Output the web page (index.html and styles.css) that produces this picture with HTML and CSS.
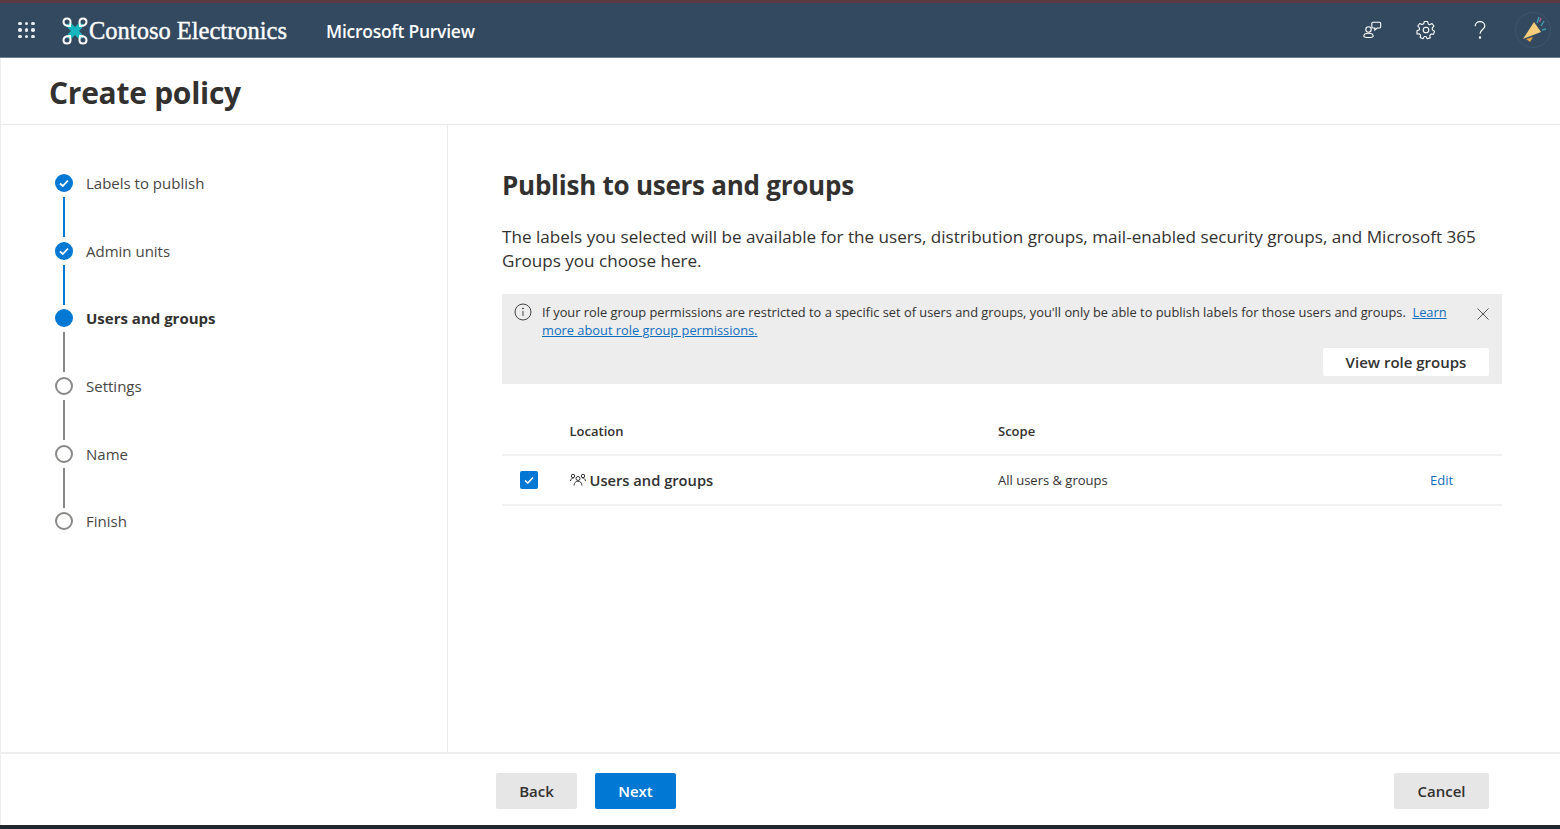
FILE: index.html
```html
<!DOCTYPE html>
<html lang="en">

<head>
    <meta charset="UTF-8">
    <meta name="viewport" content="width=device-width, initial-scale=1.0">
    <title>Create policy</title>
    <link rel="stylesheet" href="styles.css">
</head>

<body>
    <div class="app">
        <header class="topbar">
            <div class="waffle" aria-hidden="true">
                <i></i><i></i><i></i><i></i><i></i><i></i><i></i><i></i><i></i>
            </div>
            <svg class="logo" viewBox="0 0 26 28" width="26" height="28" aria-hidden="true">
                <path d="M5 7 L9 6 L13 10 L17 6 L21 7 L20 11 L17 14 L20 17 L21 21 L17 22 L13 18 L9 22 L5 21 L6 17 L9 14 L6 11 Z" fill="#17b5bd" />
                <g fill="none" stroke="#fff" stroke-width="2">
                    <path d="M8 9 C4 9 1.500 8 1.500 5 C1.500 2.500 3 1.500 5 1.500 C7 1.500 8.500 3 8.500 5 C8.500 6.500 8 8 8 9 Z" />
                    <path d="M18 9 C22 9 24.500 8 24.500 5 C24.500 2.500 23 1.500 21 1.500 C19 1.500 17.500 3 17.500 5 C17.500 6.500 18 8 18 9 Z" />
                    <path d="M8 19 C4 19 1.500 20 1.500 23 C1.500 25.500 3 26.500 5 26.500 C7 26.500 8.500 25 8.500 23 C8.500 21.500 8 20 8 19 Z" />
                    <path d="M18 19 C22 19 24.500 20 24.500 23 C24.500 25.500 23 26.500 21 26.500 C19 26.500 17.500 25 17.500 23 C17.500 21.500 18 20 18 19 Z" />
                </g>
            </svg>
            <span class="brand">Contoso Electronics</span>
            <span class="product">Microsoft Purview</span>
            <div class="top-actions">
                <button class="top-icon" aria-label="Contact">
                    <svg viewBox="0 0 20 20" width="20" height="20" fill="none" stroke="#fff" stroke-width="1.1">
                        <circle cx="6.500" cy="9.500" r="2.700" />
                        <path d="M1.800 16 C1.800 13.800 3.500 13.200 6.500 13.200 C9.500 13.200 11.200 13.800 11.200 16 C11.200 18 1.800 18 1.800 16 Z" />
                        <path d="M11 2.200 H17.500 C18.300 2.200 18.700 2.800 18.700 3.400 V6.800 C18.700 7.600 18.200 8 17.500 8 H15.200 L12.800 10 V8 H11 C10.200 8 9.800 7.500 9.800 6.800 V3.400 C9.800 2.700 10.300 2.200 11 2.200 Z" />
                    </svg>
                </button>
                <button class="top-icon" aria-label="Settings">
                    <svg viewBox="0 0 20 20" width="20" height="20" fill="none" stroke="#fff" stroke-width="1.1">
                        <circle cx="10" cy="10" r="2.800" />
                        <path d="M8.300 1.500 H11.700 L12.200 4 L13.700 4.700 L16 3.500 L18 6.200 L16.200 8 L16.400 9.900 L18.500 11.300 L17.500 14.300 L15 14.100 L13.800 15.400 L14.200 17.900 L11.200 18.700 L10 16.500 L8.300 16.500 L7 18.700 L4.200 17.600 L4.600 15.100 L3.400 13.800 L1 14 L1 10.800 L3.400 9.800 L3.500 8 L1.800 6 L3.700 3.500 L6 4.600 L7.700 3.800 Z" stroke-linejoin="round" />
                    </svg>
                </button>
                <button class="top-icon" aria-label="Help">
                    <svg viewBox="0 0 20 20" width="20" height="20" fill="none" stroke="#fff" stroke-width="1.2">
                        <path d="M5.200 6.200 C5.200 3.500 7.300 1.600 10 1.600 C12.700 1.600 14.800 3.500 14.800 6 C14.800 9.500 10 9.700 10 13.800" />
                        <circle cx="10" cy="17.500" r=".6" fill="#fff" />
                    </svg>
                </button>
                <div class="avatar" aria-label="What's new">
                    <svg viewBox="0 0 36 36" width="36" height="36">
                        <circle cx="18" cy="18" r="17.500" fill="none" stroke="#41566c" />
                        <path d="M8 27 L19 10 L26 20 Z" fill="#f7cd7c" />
                        <path d="M11 27 L15 30 L18 25 Z" fill="#e9a23f" />
                        <path d="M22 11 L24 5 M26 14 L29 9 M27 18 L31 17" stroke="#3f9fb0" stroke-width="1.400" />
                        <path d="M24.500 10 L26 6" stroke="#b65a8c" stroke-width="1.400" />
                    </svg>
                </div>
            </div>
        </header>

        <div class="page-title">
            <h1>Create policy</h1>
        </div>

        <div class="wizard">
            <nav class="steps">
                <div class="step done">
                    <span class="dot">
                        <svg viewBox="0 0 18 18" width="18" height="18"><path d="M5 9.500 L7.800 12 L13 6.500" fill="none" stroke="#fff" stroke-width="1.800" /></svg>
                    </span>
                    <span class="step-name">Labels to publish</span>
                </div>
                <div class="step done">
                    <span class="dot">
                        <svg viewBox="0 0 18 18" width="18" height="18"><path d="M5 9.500 L7.800 12 L13 6.500" fill="none" stroke="#fff" stroke-width="1.800" /></svg>
                    </span>
                    <span class="step-name">Admin units</span>
                </div>
                <div class="step current">
                    <span class="dot"></span>
                    <span class="step-name">Users and groups</span>
                </div>
                <div class="step">
                    <span class="dot"></span>
                    <span class="step-name">Settings</span>
                </div>
                <div class="step">
                    <span class="dot"></span>
                    <span class="step-name">Name</span>
                </div>
                <div class="step last">
                    <span class="dot"></span>
                    <span class="step-name">Finish</span>
                </div>
            </nav>

            <main class="content">
                <h2>Publish to users and groups</h2>
                <p class="intro">The labels you selected will be available for the users, distribution groups, mail-enabled security groups, and Microsoft 365 Groups you choose here.</p>

                <div class="notice">
                    <div class="notice-row">
                        <svg class="notice-icon" viewBox="0 0 18 18" width="18" height="18" fill="none" stroke="#444" stroke-width="1">
                            <circle cx="9" cy="9" r="8" />
                            <path d="M9 8 V13" />
                            <circle cx="9" cy="5.500" r=".5" fill="#444" />
                        </svg>
                        <p>If your role group permissions are restricted to a specific set of users and groups, you'll only be able to publish labels for those users and groups. &nbsp;<a href="#">Learn more about role group permissions.</a></p>
                        <button class="notice-close" aria-label="Close">
                            <svg viewBox="0 0 12 12" width="12" height="12" fill="none" stroke="#555" stroke-width="1"><path d="M.5 .5 L11.500 11.500 M11.500 .5 L.5 11.500" /></svg>
                        </button>
                    </div>
                    <div class="notice-actions">
                        <button class="btn-white">View role groups</button>
                    </div>
                </div>

                <div class="table">
                    <div class="tr th">
                        <div class="c-check"></div>
                        <div class="c-location">Location</div>
                        <div class="c-scope">Scope</div>
                        <div class="c-edit"></div>
                    </div>
                    <div class="tr">
                        <div class="c-check">
                            <span class="checkbox">
                                <svg viewBox="0 0 18 18" width="18" height="18"><path d="M5 9.500 L7.800 12 L13 6.500" fill="none" stroke="#fff" stroke-width="1.500" /></svg>
                            </span>
                        </div>
                        <div class="c-location loc-name">
                            <svg viewBox="0 0 16 14" width="16" height="14" fill="none" stroke="#333" stroke-width="1">
                                <circle cx="3" cy="3" r="1.700" />
                                <circle cx="13" cy="3" r="1.700" />
                                <circle cx="8" cy="5.500" r="2" />
                                <path d="M.5 8 C.8 6 2 5.200 3.500 5.200 M15.500 8 C15.200 6 14 5.200 12.500 5.200 M4 12.500 C4 10 5.800 8.200 8 8.200 C10.200 8.200 12 10 12 12.500" />
                            </svg>
                            <span>Users and groups</span>
                        </div>
                        <div class="c-scope">All users &amp; groups</div>
                        <div class="c-edit"><a href="#">Edit</a></div>
                    </div>
                </div>
            </main>
        </div>

        <footer class="footer">
            <div class="footer-main">
                <button class="btn">Back</button>
                <button class="btn primary">Next</button>
            </div>
            <button class="btn">Cancel</button>
        </footer>
    </div>
    <div class="bottom-strip"></div>
</body>

</html>
```

FILE: styles.css
```css
/* General Styles */
body {
    margin: 0;
    height: 829px;
    overflow: hidden;
    background: #fff;
    color: #323130;
    font-family: "Open Sans", "Noto Sans", sans-serif;
    display: flex;
    flex-direction: column;
}

button {
    font-family: inherit;
    cursor: pointer;
}

a {
    color: #106ebe;
}

.app {
    flex: 1;
    display: flex;
    flex-direction: column;
    min-height: 0;
    border-left: 1px solid #eee;
}

.bottom-strip {
    height: 4px;
    background: #20272e;
}

/* Top bar */
.topbar {
    height: 54px;
    border-top: 3px solid #5c3a43;
    margin-left: -1px;
    background: #33495f;
    border-bottom: 1px solid #6b7d8f;
    display: flex;
    align-items: center;
    color: #fff;
    flex-shrink: 0;
}

.waffle {
    width: 16px;
    margin-left: 18px;
    display: grid;
    grid-template-columns: repeat(3, 3.500px);
    gap: 3px;
}

.waffle i {
    width: 3.500px;
    height: 3.500px;
    border-radius: 50%;
    background: #e8edf2;
}

.logo {
    margin-left: 28px;
    margin-top: 1px;
}

.brand {
    font-family: "Liberation Serif", serif;
    font-size: 24.500px;
    margin-left: 1px;
    margin-top: 2px;
    -webkit-text-stroke: .4px #fff;
}

.product {
    font-size: 17.500px;
    font-weight: 600;
    margin-left: 39px;
    margin-top: 2px;
    letter-spacing: -.25px;
}

.top-actions {
    margin-left: auto;
    display: flex;
    align-items: center;
    margin-right: 9px;
}

.top-icon {
    width: 54px;
    height: 54px;
    border: none;
    background: none;
    padding: 0;
    display: flex;
    align-items: center;
    justify-content: center;
}

.avatar {
    width: 36px;
    height: 36px;
    margin-left: 8px;
}

/* Title */
.page-title {
    height: 66px;
    border-bottom: 1px solid #e8e8e8;
    padding-left: 48px;
    display: flex;
    align-items: center;
    flex-shrink: 0;
}

h1 {
    margin: 2px 0 0;
    font-size: 30px;
    font-weight: 700;
    letter-spacing: -.28px;
}

/* Wizard */
.wizard {
    flex: 1;
    display: flex;
    min-height: 0;
}

.steps {
    width: 447px;
    box-sizing: border-box;
    border-right: 1px solid #eaeaea;
    padding: 49px 0 0 53.500px;
    flex-shrink: 0;
}

.step {
    position: relative;
    height: 67.700px;
    display: flex;
    align-items: flex-start;
    gap: 13.500px;
    font-size: 15px;
    line-height: 18px;
    color: #484644;
}

.step::after {
    content: "";
    position: absolute;
    left: 8px;
    top: 23px;
    width: 2px;
    height: 40px;
    background: #8a8886;
}

.step.done::after {
    background: #0078d4;
}

.step.last::after {
    display: none;
}

.dot {
    width: 18px;
    height: 18px;
    box-sizing: border-box;
    border: 2px solid #8a8886;
    border-radius: 50%;
    flex-shrink: 0;
}

.done .dot,
.current .dot {
    background: #0078d4;
    border: none;
}

.dot svg {
    display: block;
}

.current .step-name {
    font-weight: 700;
    color: #323130;
}

/* Content */
.content {
    flex: 1;
    padding: 42px 58px 0 54px;
}

h2 {
    margin: 0;
    font-size: 26px;
    line-height: 36px;
    font-weight: 700;
    letter-spacing: -.25px;
}

.intro {
    margin: 22px 0 21px;
    font-size: 17.100px;
    line-height: 24px;
}

.notice {
    background: #ededed;
    height: 90px;
    box-sizing: border-box;
    padding: 9px 13px 0 12px;
}

.notice-row {
    display: flex;
    align-items: flex-start;
    gap: 10px;
}

.notice-icon {
    margin: 0;
    flex-shrink: 0;
}

.notice p {
    margin: 0;
    flex: 1;
    font-size: 12.830px;
    line-height: 18px;
}

.notice-close {
    border: none;
    background: none;
    padding: 3px 0 0;
    margin-left: 16px;
    height: 18px;
}

.notice-actions {
    display: flex;
    justify-content: flex-end;
    margin-top: 9px;
}

.btn-white {
    width: 166px;
    height: 28px;
    border: none;
    border-radius: 2px;
    background: #fff;
    color: #323130;
    font-size: 15px;
    font-weight: 600;
    padding: 0;
}

/* Table */
.table {
    margin-top: 24px;
    font-size: 13px;
}

.tr {
    display: flex;
    align-items: center;
    height: 48px;
    border-bottom: 2px solid #f3f2f1;
}

.tr.th {
    height: 46px;
    font-weight: 600;
}

.c-check {
    width: 67.500px;
    padding-left: 18px;
    box-sizing: border-box;
}

.c-location {
    width: 428.500px;
}

.c-scope {
    width: 432px;
}

.c-edit a {
    text-decoration: none;
}

.checkbox {
    display: block;
    width: 18px;
    height: 18px;
    background: #0078d4;
    border-radius: 2px;
}

.checkbox svg {
    display: block;
}

.loc-name {
    display: flex;
    align-items: center;
    gap: 4px;
    font-size: 14.700px;
    font-weight: 600;
}

/* Footer */
.footer {
    height: 71px;
    border-top: 2px solid #eee;
    display: flex;
    align-items: center;
    justify-content: space-between;
    padding: 0 71px 0 495px;
    flex-shrink: 0;
}

.footer-main {
    display: flex;
    gap: 18px;
}

.btn {
    width: 81px;
    height: 36px;
    border: none;
    border-radius: 2px;
    background: #e6e6e6;
    color: #323130;
    font-size: 15px;
    font-weight: 600;
    padding: 0;
    margin-top: 2px;
}

.btn.primary {
    background: #0078d4;
    color: #fff;
}

.footer > .btn {
    width: 95px;
}
```
